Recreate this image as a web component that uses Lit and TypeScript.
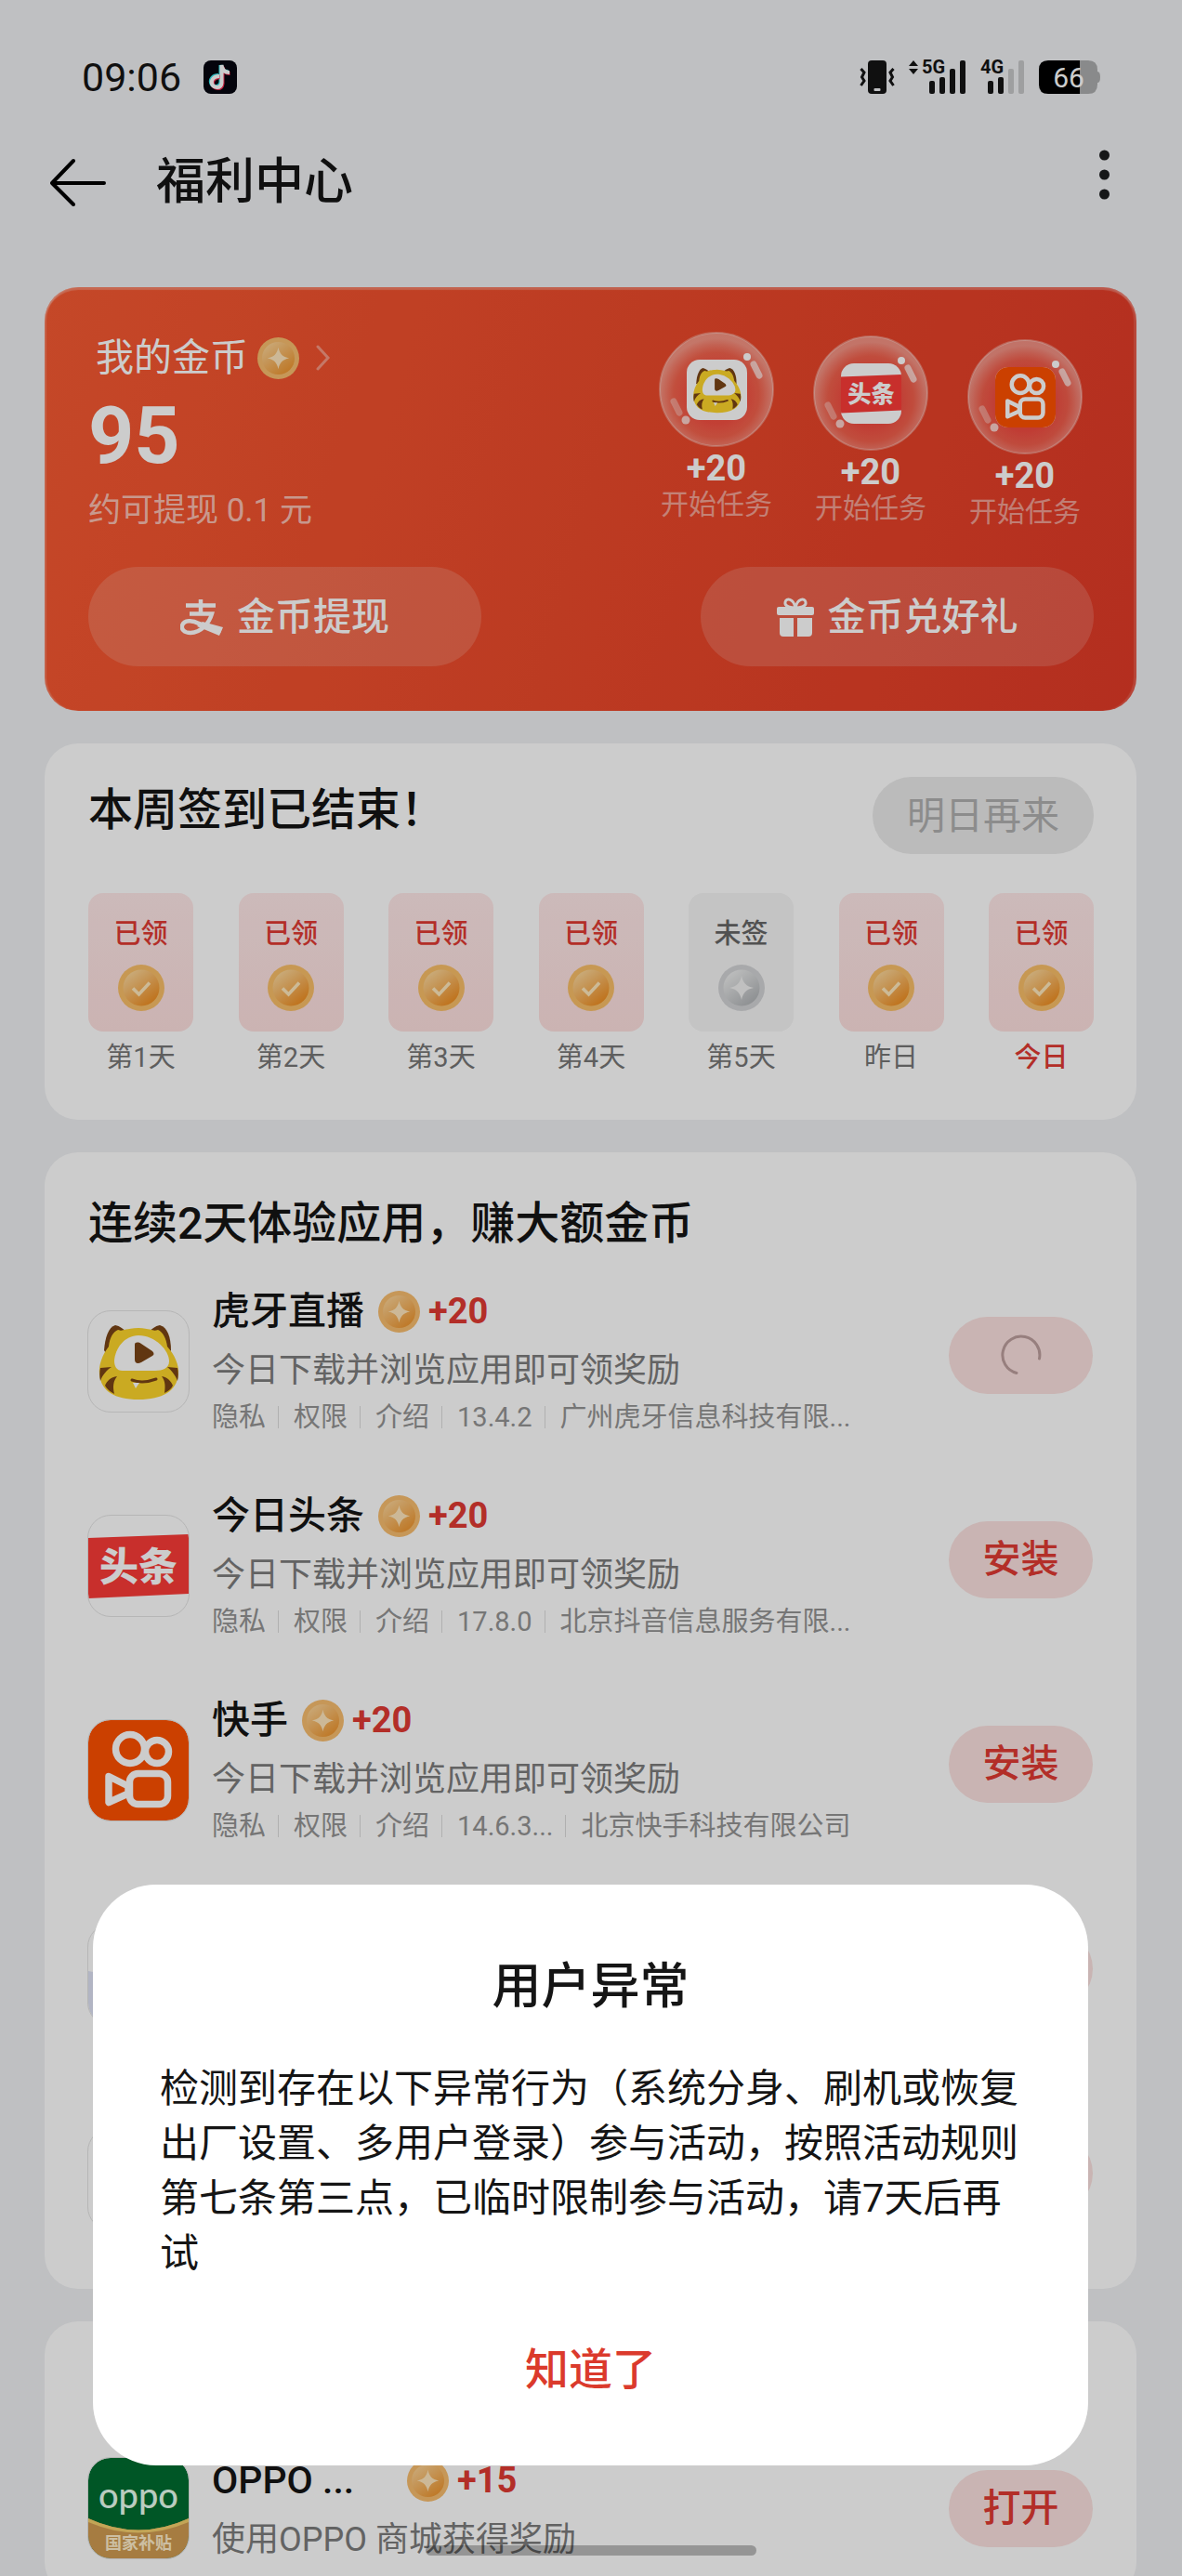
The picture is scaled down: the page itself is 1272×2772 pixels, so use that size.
import { LitElement, html, css, svg, nothing } from 'lit';
import { customElement, property } from 'lit/decorators.js';
import { classMap } from 'lit/directives/class-map.js';

interface CheckinDay {
  label: string;
  state: string;
  missed?: boolean;
  today?: boolean;
}

interface AppTask {
  app: string;
  name: string;
  reward: string;
  desc: string;
  version?: string;
  company?: string;
  action: string;
  loading?: boolean;
  short?: boolean;
}

const DAYS: CheckinDay[] = [
  { label: '第1天', state: '已领' },
  { label: '第2天', state: '已领' },
  { label: '第3天', state: '已领' },
  { label: '第4天', state: '已领' },
  { label: '第5天', state: '未签', missed: true },
  { label: '昨日', state: '已领' },
  { label: '今日', state: '已领', today: true },
];

const DAILY_DESC = '今日下载并浏览应用即可领奖励';

const TASKS: AppTask[] = [
  { app: 'huya', name: '虎牙直播', reward: '+20', desc: DAILY_DESC, version: '13.4.2', company: '广州虎牙信息科技有限...', action: '安装', loading: true },
  { app: 'toutiao', name: '今日头条', reward: '+20', desc: DAILY_DESC, version: '17.8.0', company: '北京抖音信息服务有限...', action: '安装' },
  { app: 'kuaishou', name: '快手', reward: '+20', desc: DAILY_DESC, version: '14.6.3...', company: '北京快手科技有限公司', action: '安装' },
  { app: 'cloud', name: '', reward: '', desc: '', version: '', company: '', action: '' },
  { app: 'plain', name: '', reward: '', desc: '', version: '', company: '', action: '' },
];

const MORE_TASKS: AppTask[] = [
  { app: 'oppo', name: 'OPPO ...', reward: '+15', desc: '使用OPPO 商城获得奖励', action: '打开', short: true },
];

const BUBBLES = ['huya', 'toutiao', 'kuaishou'];

@customElement('gold-coin')
export class GoldCoin extends LitElement {

  static styles = css`
    :host {
        display: block;
        flex: none;
        width: 45px;
        height: 45px;
    }
    :host([kind='check']), :host([kind='gray']) {
        width: 50px;
        height: 50px;
    }
    .coin {
        display: block;
        width: 100%;
        height: 100%;
    }
  `;

  @property({ reflect: true })
  kind = 'star';

  get colors() {
    if (this.kind === 'gray') {
      return ['#d3d4d6', '#eceded', '#b0b3b6', '#f0f0f0'];
    }
    if (this.kind === 'check') {
      return ['#f9bf68', '#fbd699', '#ef8d20', '#ffe9bd'];
    }
    return ['#f8bd6e', '#fbd193', '#ee9630', '#ffe7bd'];
  }

  render() {
    const [rim, light, dark, mark] = this.colors;
    return html`
    <svg class="coin" viewBox="0 0 50 50" aria-hidden="true">
        <defs>
            <linearGradient id="face" x1="0.15" y1="0.1" x2="0.8" y2="0.95">
                <stop offset="0" stop-color="${light}" />
                <stop offset="1" stop-color="${dark}" />
            </linearGradient>
        </defs>
        <circle cx="25" cy="25" r="25" fill="${rim}" />
        <circle cx="25" cy="25" r="19.5" fill="url(#face)" />
        ${this.kind === 'check'
          ? svg`<path d="M16 25.5l6.500 6.500L34 19.500" fill="none" stroke="${mark}" stroke-width="3.600" />`
          : svg`<path d="M25 12C26.500 19.500 30 23.500 38 25C30 26.500 26.500 30.500 25 38C23.500 30.500 20 26.500 12 25C20 23.500 23.500 19.500 25 12Z" fill="${mark}" />`}
    </svg>
    `;
  }
}

@customElement('app-icon')
export class AppIcon extends LitElement {

  static styles = css`
    :host {
        display: block;
        flex: none;
        width: 108px;
        height: 108px;
    }
    .icon {
        display: block;
        width: 100%;
        height: 100%;
    }
    .logo-cjk {
        font: 900 42px "Noto Sans CJK SC", sans-serif;
    }
    .oppo {
        font: 500 38px Lato, sans-serif;
    }
    .subsidy {
        font: 700 18px "Noto Sans CJK SC", sans-serif;
    }
  `;

  @property()
  app = 'plain';

  get art() {
    switch (this.app) {
      case 'huya':
        return svg`
          <path d="M17 42C18 28 22 17 29 15C34 16 38 19 42 23L22 50Z" fill="#7a4416" />
          <path d="M89 42C89 28 85 17 77 15C72 16 68 19 64 23L84 50Z" fill="#7a4416" />
          <path d="M22 38C23 28 27 22 32 20C38 22 36 19 54 18C70 19 69 22 75 20C80 22 84 29 85 38C93 47 98 58 97 68C95 86 80 95 54 95C28 95 14 86 12 68C11 58 15 47 22 38Z" fill="#fdd52b" />
          <path d="M54 26C72 26 87 42 87 54C87 61 80 64 72 64H37C30 64 28 59 28 53C29 40 39 26 54 26Z" fill="#fff" />
          <path d="M50 36C50 33 54 33 57 35L69 43C71 45 71 47 69 48L57 55C53 57 50 56 50 52Z" fill="#7a4416" />
          <path d="M13 61L25 60C20 63 15 69 13 75C12 70 12 66 13 61ZM18 80C20 75 24 71 31 70C27 75 26 81 28 89C24 87 20 84 18 80Z" fill="#7a4416" />
          <path d="M96 61L85 60C89 63 94 69 96 75C97 70 97 66 96 61ZM91 80C89 75 85 71 79 70C83 75 83 81 82 88C86 86 89 84 91 80Z" fill="#7a4416" />
          <path d="M47 74C55 77 65 76 73 73" fill="none" stroke="#7a4416" stroke-width="3" stroke-linecap="round" />
          <path d="M48 77H55L51 83Z" fill="#fff" />`;
      case 'toutiao':
        return svg`
          <path d="M0 24L108 20V84L0 89Z" fill="#fb3b38" />
          <text class="logo-cjk" x="54" y="70" text-anchor="middle" fill="#fff">头条</text>`;
      case 'kuaishou':
        return svg`
          <rect width="108" height="108" fill="#fe5100" />
          <g fill="none" stroke="#fff" stroke-width="7.500" stroke-linejoin="round">
              <circle cx="45" cy="31" r="15.500" />
              <circle cx="74" cy="34" r="12.500" />
              <rect x="44.500" y="57.500" width="41" height="33" rx="9" />
              <path d="M22 60.500L43 71V79L22 88.500Z" />
          </g>`;
      case 'oppo':
        return svg`
          <rect width="108" height="108" fill="#016c30" />
          <path d="M0 65Q54 90 108 65V108H0Z" fill="#d09c52" />
          <path d="M0 65Q54 90 108 65V69Q54 92 0 69Z" fill="#f3cf6c" />
          <text class="oppo" x="54" y="54" text-anchor="middle" fill="#e8fff0">oppo</text>
          <text class="subsidy" x="54" y="98" text-anchor="middle" fill="#ffeecb">国家补贴</text>`;
      case 'cloud':
        return svg`<path d="M0 50Q54 62 108 50V108H0Z" fill="#dfe3f6" />`;
      default:
        return nothing;
    }
  }

  render() {
    return html`<svg class="icon" viewBox="0 0 108 108" aria-hidden="true"><rect width="108" height="108" fill="#fff" />${this.art}</svg>`;
  }
}

@customElement('app-root')
export class AppRoot extends LitElement {

  static styles = css`
    :host {
        --ink: #151515;
        --red: #e03a32;
        --pink: #fce2e0;
        position: relative;
        display: block;
        height: 100vh;
        overflow: hidden;
        background: #eff0f3;
        color: var(--ink);
        font-family: Roboto, "Noto Sans CJK SC", sans-serif;
    }
    * {
        box-sizing: border-box;
    }
    h1, h2, h3, p, ul {
        margin: 0;
        padding: 0;
        list-style: none;
    }
    h1, h2, h3 {
        font-weight: 500;
    }
    button {
        border: 0;
        padding: 0;
        background: none;
        color: inherit;
        font-family: inherit;
        cursor: pointer;
    }
    svg {
        display: block;
        flex: none;
    }

    /* status bar */
    .status {
        display: flex;
        align-items: center;
        padding: 61px 88px 0;
        height: 105px;
    }
    .clock {
        font-size: 43px;
        line-height: 44px;
    }
    .status .douyin {
        margin-left: 24px;
    }
    .indicators {
        display: flex;
        align-items: center;
        gap: 15px;
        margin-left: auto;
    }
    .net {
        font: 700 20px Roboto, sans-serif;
    }
    .level {
        font: 400 30px Roboto, sans-serif;
    }

    .topbar {
        display: flex;
        align-items: center;
        gap: 53px;
        padding: 56px 78px 0 54px;
    }
    .topbar h1 {
        flex: 1;
        font-size: 53px;
        line-height: 70px;
    }
    .menu {
        align-self: flex-start;
    }

    .page {
        display: flex;
        flex-direction: column;
        gap: 35px;
        padding: 78px 49px 35px 48px;
    }
    .card {
        flex: none;
        padding: 45px 47px 36px;
        border-radius: 36px;
        background: #fff;
    }
    .card h2 {
        min-height: 64px;
        font-size: 48px;
        line-height: 64px;
    }

    /* coin balance */
    .wallet {
        padding: 48px 46px 48px 47px;
        background: linear-gradient(105deg, #f75a32, #ec4a2b 50%, #e13a27);
        box-shadow: inset 0 3px 1px rgba(255, 255, 255, 0.25), inset 2px 0 1px rgba(255, 255, 255, 0.2), inset -3px 0 1px rgba(255, 255, 255, 0.15);
        color: #fff;
    }
    .wallet-top {
        display: flex;
        justify-content: space-between;
    }
    .balance {
        padding-top: 4px;
    }
    .my-coins {
        display: flex;
        align-items: center;
        padding: 0 8px;
        font-size: 41px;
        line-height: 48px;
        gap: 10px;
    }
    .my-coins svg {
        margin-left: 8px;
    }
    .amount {
        margin-top: 18px;
        font-size: 86px;
        font-weight: 700;
        line-height: 84px;
    }
    .worth {
        margin-top: 17px;
        font-size: 35px;
        line-height: 44px;
        color: rgba(255, 255, 255, 0.65);
    }
    .bubbles {
        display: flex;
        gap: 42px;
        padding-right: 12px;
    }
    .bubble {
        display: flex;
        flex-direction: column;
        align-items: center;
        width: 124px;
        font-size: 30px;
        line-height: 36px;
        color: rgba(255, 255, 255, 0.5);
        white-space: nowrap;
    }
    /* the bubbles float at staggered heights */
    .bubble:nth-child(2) {
        margin-top: 4px;
    }
    .bubble:nth-child(3) {
        margin-top: 8px;
    }
    .ball {
        display: grid;
        place-items: center;
        margin-bottom: 5px;
    }
    .ball > * {
        grid-area: 1 / 1;
    }
    .ball app-icon {
        width: 65px;
        height: 65px;
        border-radius: 14px;
        overflow: hidden;
    }
    .bonus {
        margin-bottom: 3px;
        font-size: 38px;
        font-weight: 700;
        color: #fff;
    }
    .wallet-actions {
        display: flex;
        justify-content: space-between;
        margin-top: 38px;
    }
    .glass {
        display: flex;
        align-items: center;
        justify-content: center;
        gap: 15px;
        flex: 0 1 423px;
        height: 107px;
        border-radius: 54px;
        background: rgba(255, 255, 255, 0.16);
        font-size: 41px;
        font-weight: 500;
        line-height: 48px;
    }

    /* weekly check-in */
    .checkin {
        padding: 36px 46px 47px 47px;
    }
    .checkin-head {
        display: flex;
        align-items: flex-start;
        justify-content: space-between;
    }
    .checkin-head h2 {
        padding-top: 4px;
    }
    .tomorrow {
        width: 238px;
        height: 83px;
        border-radius: 42px;
        background: #eaeaea;
        color: #b0b0b0;
        font-size: 41px;
        line-height: 48px;
    }
    .days {
        display: flex;
        justify-content: space-between;
        margin-top: 42px;
    }
    .day {
        display: flex;
        flex-direction: column;
        align-items: center;
        gap: 8px;
        font-size: 29px;
        line-height: 40px;
        color: #767676;
    }
    .tile {
        display: flex;
        flex-direction: column;
        align-items: center;
        gap: 13px;
        width: 113px;
        height: 149px;
        padding-top: 24px;
        border-radius: 16px;
        background: linear-gradient(#ffe9e9, #fee0df);
        color: var(--red);
        font-weight: 500;
    }
    .missed .tile {
        background: #f5f5f5;
        color: #666;
    }
    .today {
        color: var(--red);
        font-weight: 500;
    }

    /* app tasks */
    .tasks {
        display: flex;
        flex-direction: column;
        gap: 56px;
        margin-top: 34px;
    }
    .task {
        display: flex;
        align-items: center;
    }
    .task app-icon {
        border-radius: 24px;
        overflow: hidden;
        outline: 1px solid #e4e4e4;
    }
    .info {
        flex: 1;
        min-width: 0;
        margin-left: 25px;
    }
    .name-line {
        display: flex;
        align-items: center;
        height: 56px;
    }
    .name-line h3 {
        font-size: 41px;
        line-height: 56px;
    }
    .short h3 {
        min-width: 195px;
    }
    .name-line gold-coin {
        margin: 0 9px 0 15px;
    }
    .reward {
        font-size: 38px;
        font-weight: 700;
        color: var(--red);
    }
    .desc {
        height: 48px;
        margin-top: 12px;
        font-size: 36px;
        line-height: 48px;
        color: #7c7c7c;
    }
    .meta {
        display: flex;
        align-items: center;
        height: 44px;
        margin-top: 4px;
        font-size: 29px;
        line-height: 44px;
        color: #949494;
        white-space: nowrap;
    }
    .meta a {
        color: inherit;
        text-decoration: none;
    }
    .meta i {
        width: 1px;
        height: 24px;
        margin: 0 16px 0 13px;
        background: #dcdcdc;
    }
    .action {
        display: grid;
        place-items: center;
        width: 155px;
        height: 83px;
        border-radius: 42px;
        background: var(--pink);
        color: var(--red);
        font-size: 41px;
        font-weight: 500;
        line-height: 48px;
    }
    .with-meta .action {
        margin-bottom: 14px;
    }

    /* dialog over the dimmed page */
    .mask {
        position: absolute;
        inset: 0;
        display: flex;
        align-items: flex-end;
        padding: 0 101px 119px 100px;
        background: rgba(0, 0, 0, 0.2);
    }
    .dialog {
        display: flex;
        flex-direction: column;
        align-items: center;
        flex: 1;
        padding: 78px 72px 71px;
        border-radius: 68px;
        background: #fff;
    }
    .dialog h2 {
        font-size: 53px;
        line-height: 64px;
    }
    .dialog p {
        align-self: stretch;
        margin-top: 48px;
        font-size: 42px;
        line-height: 59px;
    }
    .confirm {
        margin-top: 64px;
        font-size: 47px;
        font-weight: 500;
        line-height: 64px;
        color: #db3a2c;
    }
    .home-bar {
        position: absolute;
        inset: auto 0 22px;
        width: 356px;
        height: 11px;
        margin: 0 auto;
        border-radius: 6px;
        background: rgba(0, 0, 0, 0.27);
    }
  `;

  renderSignal(net: string, strength: number, arrows = false) {
    const tops = [22, 18, 9, 0];
    return html`
    <svg width="${arrows ? 62 : 48}" height="48" viewBox="${arrows ? '-14 -6 62 48' : '0 -6 48 48'}" aria-hidden="true">
        ${arrows ? svg`<path d="M-14 6L-9 0L-4 6ZM-14 9H-4L-9 15Z" fill="#151515" />` : nothing}
        <text class="net" x="0" y="14" fill="#151515">${net}</text>
        ${tops.map((top, i) => svg`<rect x="${8 + i * 11}" y="${top}" width="6" height="${36 - top}" rx="2" fill="${i < strength ? '#151515' : '#c6c7c8'}" />`)}
    </svg>`;
  }

  renderStatus() {
    return html`
    <div class="status">
        <span class="clock">09:06</span>
        <svg class="douyin" width="36" height="36" viewBox="0 0 36 36" aria-hidden="true">
            <rect width="36" height="36" rx="8" fill="#05060f" />
            <g fill="none" stroke-width="4">
                <path d="M16 16C10 16 7 20 8 24C9 29 18 30 18.500 23V5C19 9 22 12 26.500 12" stroke="#35e8ee" />
                <path d="M18 18C12 18 9 22 10 26C11 31 20 32 20.500 25V7C21 11 24 14 28.500 14" stroke="#f6294f" />
                <path d="M17 17C11 17 8 21 9 25C10 30 19 31 19.500 24V5C20 10 23 13 28 13" stroke="#fff" />
            </g>
        </svg>
        <div class="indicators">
            <svg width="38" height="38" viewBox="0 0 38 38" aria-hidden="true">
                <rect x="9" y="1" width="20" height="36" rx="4" fill="#151515" />
                <rect x="15.500" y="31" width="7" height="3" rx="1" fill="#eff0f3" />
                <path d="M1.500 10L5 14L2.500 19L5 23L1.500 28M36.500 10L33 14L35.500 19L33 23L36.500 28" fill="none" stroke="#151515" stroke-width="3" />
            </svg>
            ${this.renderSignal('5G', 4, true)}
            ${this.renderSignal('4G', 2)}
            <svg width="66" height="36" viewBox="0 0 66 36" aria-hidden="true">
                <path d="M44 0H53Q63 0 63 10V12Q66 12 66 18Q66 24 63 24V26Q63 36 53 36H44Z" fill="#acadae" />
                <path d="M10 0H44V36H10Q0 36 0 26V10Q0 0 10 0Z" fill="#000" />
                <text class="level" x="32" y="29" text-anchor="middle" fill="#fff">66</text>
            </svg>
        </div>
    </div>`;
  }

  renderBubble(app: string) {
    return html`
    <button class="bubble">
        <span class="ball">
            <svg width="124" height="124" viewBox="0 0 124 124" aria-hidden="true">
                <defs>
                    <radialGradient id="glass" cy="0.55">
                        <stop offset="0.5" stop-color="#ff5a60" stop-opacity="0.45" />
                        <stop offset="0.75" stop-color="#ff8a80" stop-opacity="0.4" />
                        <stop offset="1" stop-color="#ffe0dc" stop-opacity="0.5" />
                    </radialGradient>
                </defs>
                <circle cx="62" cy="62" r="61" fill="url(#glass)" stroke="#fff" stroke-opacity="0.3" stroke-width="2" />
            </svg>
            <app-icon app="${app}"></app-icon>
            <svg width="124" height="124" viewBox="0 0 124 124" aria-hidden="true">
                <circle cx="95" cy="27" r="4" fill="#fff" />
                <path d="M102 35L108 47" stroke="#fff" stroke-opacity="0.65" stroke-width="7" stroke-linecap="round" />
                <path d="M16 75L22 87" stroke="#fff" stroke-opacity="0.35" stroke-width="7" stroke-linecap="round" />
                <circle cx="29" cy="95" r="4.500" fill="#fff" fill-opacity="0.7" />
            </svg>
        </span>
        <span class="bonus">+20</span>
        <span>开始任务</span>
    </button>`;
  }

  renderWallet() {
    return html`
    <section class="card wallet">
        <div class="wallet-top">
            <div class="balance">
                <button class="my-coins">
                    我的金币<gold-coin></gold-coin>
                    <svg width="16" height="28" viewBox="0 0 16 28" aria-hidden="true">
                        <path d="M2 2L13 14L2 26" fill="none" stroke="#fff" stroke-opacity="0.4" stroke-width="3" stroke-linecap="round" />
                    </svg>
                </button>
                <p class="amount">95</p>
                <p class="worth">约可提现 0.1 元</p>
            </div>
            <div class="bubbles">${BUBBLES.map((app) => this.renderBubble(app))}</div>
        </div>
        <div class="wallet-actions">
            <button class="glass">
                <svg width="46" height="40" viewBox="0 0 46 40" aria-hidden="true">
                    <g fill="none" stroke="#fff">
                        <path d="M6 7.500H38M22 1V15" stroke-width="4.500" />
                        <path d="M10 16.500H34C31 27 22 37 11 37C4 37 1 33 2 29C4 23 13 23 20 27L44 35" stroke-width="4.500" />
                    </g>
                    <path d="M24 25L46 31L42 40L18 30Z" fill="#fff" />
                </svg>
                金币提现
            </button>
            <button class="glass">
                <svg width="40" height="42" viewBox="0 0 40 42" aria-hidden="true">
                    <path d="M20 11C16 11 8 10 9 5C10 0 18 1 20 11C22 1 30 0 31 5C32 10 24 11 20 11Z" fill="none" stroke="#fff" stroke-width="3" />
                    <rect y="10" width="40" height="9" rx="2" fill="#fff" />
                    <path d="M3 22H18V42H7Q3 42 3 38ZM22 22H38V38Q38 42 34 42H22Z" fill="#fff" />
                </svg>
                金币兑好礼
            </button>
        </div>
    </section>`;
  }

  renderDay(day: CheckinDay) {
    return html`
    <li class=${classMap({ day: true, missed: !!day.missed, today: !!day.today })}>
        <div class="tile">
            <span>${day.state}</span>
            <gold-coin kind="${day.missed ? 'gray' : 'check'}"></gold-coin>
        </div>
        <span>${day.label}</span>
    </li>`;
  }

  renderTask(task: AppTask) {
    const hasMeta = task.version !== undefined;
    return html`
    <li class=${classMap({ task: true, 'with-meta': hasMeta, short: !!task.short })}>
        <app-icon app="${task.app}"></app-icon>
        <div class="info">
            <div class="name-line">
                ${task.name ? html`<h3>${task.name}</h3><gold-coin></gold-coin><span class="reward">${task.reward}</span>` : nothing}
            </div>
            <p class="desc">${task.desc}</p>
            ${hasMeta ? html`
            <div class="meta">
                ${task.version ? html`
                <a href="#privacy">隐私</a><i></i>
                <a href="#permission">权限</a><i></i>
                <a href="#about">介绍</a><i></i>
                <span>${task.version}</span><i></i>
                <span>${task.company}</span>` : nothing}
            </div>` : nothing}
        </div>
        <button class="action" aria-label="${task.loading ? '加载中' : nothing}">
            ${task.loading ? html`
            <svg width="44" height="44" viewBox="0 0 44 44" aria-hidden="true">
                <path d="M41.500 26A20 20 0 1 0 17 41.500" fill="none" stroke="#bd9f9e" stroke-width="3" stroke-linecap="round" />
            </svg>` : task.action}
        </button>
    </li>`;
  }

  render() {
    return html`
    ${this.renderStatus()}
    <header class="topbar">
        <button aria-label="返回">
            <svg width="61" height="52" viewBox="0 0 61 52" aria-hidden="true">
                <path d="M25 3L2 27L25 50M2 27H58" fill="none" stroke="#000" stroke-width="4" stroke-linecap="round" stroke-linejoin="round" />
            </svg>
        </button>
        <h1>福利中心</h1>
        <button class="menu" aria-label="更多">
            <svg width="11" height="54" viewBox="0 0 11 54" aria-hidden="true">
                <g fill="#1c1d1f"><circle cx="5.500" cy="6" r="5.500" /><circle cx="5.500" cy="27" r="5.500" /><circle cx="5.500" cy="48" r="5.500" /></g>
            </svg>
        </button>
    </header>
    <main class="page">
        ${this.renderWallet()}
        <section class="card checkin">
            <div class="checkin-head">
                <h2>本周签到已结束！</h2>
                <button class="tomorrow">明日再来</button>
            </div>
            <ul class="days">${DAYS.map((day) => this.renderDay(day))}</ul>
        </section>
        <section class="card">
            <h2>连续2天体验应用，赚大额金币</h2>
            <ul class="tasks">${TASKS.map((task) => this.renderTask(task))}</ul>
        </section>
        <section class="card">
            <h2></h2>
            <ul class="tasks">${MORE_TASKS.map((task) => this.renderTask(task))}</ul>
        </section>
    </main>
    <div class="mask">
        <div class="dialog" role="dialog" aria-modal="true" aria-labelledby="dialog-title">
            <h2 id="dialog-title">用户异常</h2>
            <p>检测到存在以下异常行为（系统分身、刷机或恢复出厂设置、多用户登录）参与活动，按照活动规则第七条第三点，已临时限制参与活动，请7天后再试</p>
            <button class="confirm">知道了</button>
        </div>
        <div class="home-bar"></div>
    </div>
    `;
  }
}
